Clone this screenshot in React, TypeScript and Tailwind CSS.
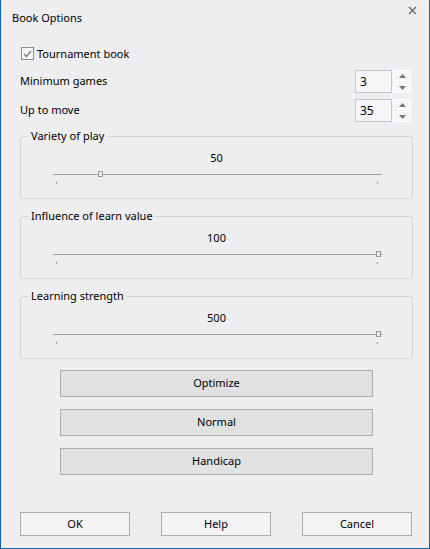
const Slider = ({ value, thumb }: { value: string; thumb: number }) => (
  <div className="flex flex-col items-center">
    <div className="h-[17px] pt-[1px] leading-[16px]">{value}</div>
    <div className="relative mt-[8px] h-[12px] w-[329px] self-start ml-[32px]">
      <div className="absolute left-0 top-[0px] h-px w-full bg-[#a0a0a0]" />
      <div
        className="absolute top-[-3px] h-[6px] w-[5px] border border-[#9a9a9a] bg-[#e9e9ee]"
        style={{ left: thumb }}
      />
      <div className="absolute left-[3px] top-[8px] h-[2px] w-px bg-[#9a9a9a]" />
      <div className="absolute left-[324px] top-[8px] h-[2px] w-px bg-[#9a9a9a]" />
    </div>
  </div>
);

const Group = ({ title, value, thumb }: { title: string; value: string; thumb: number }) => (
  <div className="relative h-[63px] w-[393px] rounded-[3px] border border-[#d2d2dc]">
    <span className="absolute left-[7px] top-[-9px] bg-[#eeeef1] px-[3px] leading-[16px]">{title}</span>
    <div className="pt-[12px]">
      <Slider value={value} thumb={thumb} />
    </div>
  </div>
);

const Spin = ({ value }: { value: string }) => (
  <div className="flex gap-[1px]">
    <div className="flex h-[23px] w-[37px] items-center border border-[#c6c6d2] bg-[#f6f6f8] pl-[4px] text-[12px]">
      {value}
    </div>
    <div className="flex w-[18px] flex-col gap-[1px]">
      <div className="flex h-[11px] items-center justify-center border border-white bg-[#f5f5f7]">
        <svg width="7" height="4" viewBox="0 0 7 4"><path d="M0 4 L3.5 0 L7 4 Z" fill="#777" /></svg>
      </div>
      <div className="flex h-[11px] items-center justify-center border border-white bg-[#f5f5f7]">
        <svg width="7" height="4" viewBox="0 0 7 4"><path d="M0 0 L3.5 4 L7 0 Z" fill="#777" /></svg>
      </div>
    </div>
  </div>
);

export default function App() {
  return (
    <div
      className="flex h-[549px] w-[430px] flex-col border-x border-b border-[#0a63b0] bg-[#eeeef1] text-[11px] text-black"
      style={{ fontFamily: '"Noto Sans", "Open Sans", sans-serif' }}
    >
      <div className="flex h-[36px] items-start justify-between pl-[11px] pr-[12px]">
        <span className="mt-[9px] leading-[18px]">Book Options</span>
        <svg className="mt-[6px]" width="9" height="9" viewBox="0 0 9 9">
          <path d="M1 1 L8 8 M8 1 L1 8" stroke="#6a6a6a" strokeWidth="1.4" />
        </svg>
      </div>

      <div className="flex flex-col pl-[19px]">
        <label className="mt-[11px] flex h-[13px] items-center">
          <span className="ml-[1px] flex h-[13px] w-[13px] items-center justify-center border border-[#8f8f8f] bg-[#f4f4f6]">
            <svg width="9" height="8" viewBox="0 0 9 8">
              <path d="M1 4 L3.5 6.5 L8 1" fill="none" stroke="#7a7a7a" strokeWidth="1.4" />
            </svg>
          </span>
          <span className="ml-[3px] leading-[16px]">Tournament book</span>
        </label>

        <div className="mt-[10px] flex h-[23px] items-center justify-between pr-[18px]">
          <span>Minimum games</span>
          <Spin value="3" />
        </div>
        <div className="mt-[6px] flex h-[23px] items-center justify-between pr-[18px]">
          <span>Up to move</span>
          <Spin value="35" />
        </div>

        <div className="mt-[14px] flex flex-col gap-[17px]">
          <Group title="Variety of play" value="50" thumb={45} />
          <Group title="Influence of learn value" value="100" thumb={323} />
          <Group title="Learning strength" value="500" thumb={323} />
        </div>

        <div className="ml-[40px] mt-[11px] flex w-[313px] flex-col gap-[12px]">
          {['Optimize', 'Normal', 'Handicap'].map((b) => (
            <button
              key={b}
              className="h-[27px] border border-[#adadad] bg-[#e1e1e1]"
            >
              {b}
            </button>
          ))}
        </div>

        <div className="mt-[37px] flex gap-[31px]">
          {['OK', 'Help', 'Cancel'].map((b) => (
            <button
              key={b}
              className="h-[24px] w-[110px] border border-[#adadad] bg-[#f4f4f6]"
            >
              {b}
            </button>
          ))}
        </div>
      </div>
    </div>
  );
}
